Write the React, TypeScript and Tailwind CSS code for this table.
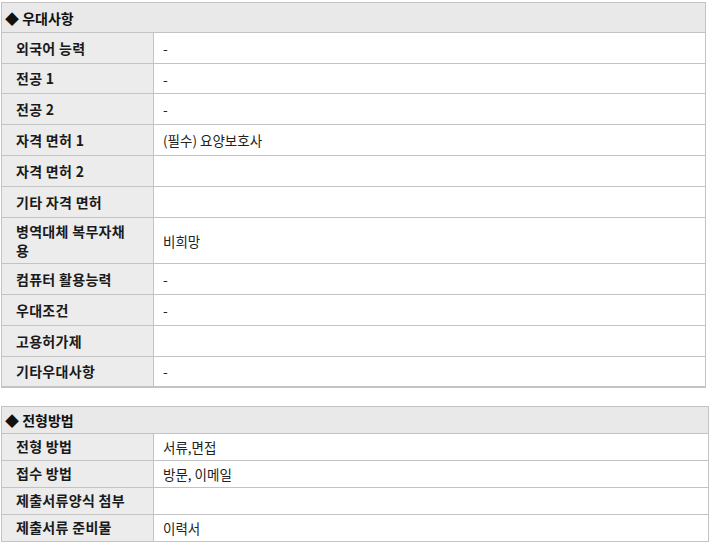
import React from "react";

const font = { fontFamily: '"Noto Sans CJK KR", "Noto Sans", sans-serif' };

type Row = { label: React.ReactNode; value: string; h: string };

const rows1: Row[] = [
  { label: "외국어 능력", value: "-", h: "h-[31px]" },
  { label: "전공 1", value: "-", h: "h-[30px]" },
  { label: "전공 2", value: "-", h: "h-[31px]" },
  { label: "자격 면허 1", value: "(필수) 요양보호사", h: "h-[31px]" },
  { label: "자격 면허 2", value: "", h: "h-[31px]" },
  { label: "기타 자격 면허", value: "", h: "h-[31px]" },
  { label: <>병역대체 복무자채<br />용</>, value: "비희망", h: "h-[46px]" },
  { label: "컴퓨터 활용능력", value: "-", h: "h-[31px]" },
  { label: "우대조건", value: "-", h: "h-[31px]" },
  { label: "고용허가제", value: "", h: "h-[31px]" },
  { label: "기타우대사항", value: "-", h: "h-[30px]" },
];

const rows2: Row[] = [
  { label: "전형 방법", value: "서류,면접", h: "h-[27px]" },
  { label: "접수 방법", value: "방문, 이메일", h: "h-[27px]" },
  { label: "제출서류양식 첨부", value: "", h: "h-[27px]" },
  { label: "제출서류 준비물", value: "이력서", h: "h-[27px]" },
];

function Table({ title, rows, width, headH, bottom }: { title: string; rows: Row[]; width: string; headH: string; bottom: string }) {
  return (
    <table className={`${width} border-collapse table-fixed ${bottom} border-[#c3c3c3]`} style={font}>
      <colgroup>
        <col className="w-[152px]" />
        <col />
      </colgroup>
      <tbody>
        <tr className={headH}>
          <td colSpan={2} className="border border-[#c3c3c3] bg-[#e9e9e9] pl-[3px] p-0 text-[14px] font-bold text-[#111] leading-[16px]">
            ◆ {title}
          </td>
        </tr>
        {rows.map((r, i) => (
          <tr key={i} className={r.h}>
            <td className="border border-[#c3c3c3] bg-[#ececec] pl-[14px] pr-1 py-0 text-[14px] font-bold text-[#1a1a1a] leading-[19px] tracking-[0.3px]">
              {r.label}
            </td>
            <td className="border border-[#c3c3c3] bg-white pl-[9px] py-0 text-[13.5px] text-[#222] leading-[16px]">
              {r.value}
            </td>
          </tr>
        ))}
      </tbody>
    </table>
  );
}

export default function App() {
  return (
    <div className="w-[722px] h-[548px] bg-white pt-[2px] pl-px">
      <Table title="우대사항" rows={rows1} width="w-[705px]" headH="h-[30px]" bottom="border-b-2" />
      <div className="h-[18px]" />
      <Table title="전형방법" rows={rows2} width="w-[708px]" headH="h-[27px]" bottom="" />
    </div>
  );
}
